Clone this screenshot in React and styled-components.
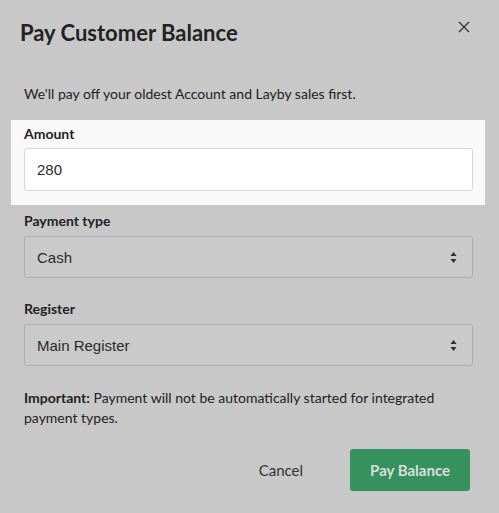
import styled, { createGlobalStyle } from "styled-components";

const GlobalStyle = createGlobalStyle`
  html, body {
    margin: 0;
    padding: 0;
    background: #c8c8c8;
  }
  body {
    font-family: Lato, "Liberation Sans", Arial, sans-serif;
    color: #222;
  }
`;

const Modal = styled.div`
  width: 499px;
  height: 513px;
  box-sizing: border-box;
  background: #c8c8c8;
  padding: 0 26px 0 24px;
`;

const Header = styled.div`
  display: flex;
  align-items: flex-start;
  justify-content: space-between;
  padding-top: 19px;
  margin-left: -4px;
  margin-right: 3px;
`;

const Title = styled.h2`
  margin: 0;
  font-size: 22px;
  line-height: 28px;
  font-weight: 700;
  color: #222;
`;

const CloseButton = styled.button`
  border: 0;
  background: transparent;
  padding: 0;
  margin-top: 2px;
  width: 12px;
  height: 12px;
  display: flex;
  cursor: pointer;
  svg {
    width: 12px;
    height: 12px;
  }
`;

const Intro = styled.p`
  margin: 37px 0 16px;
  font-size: 14px;
  line-height: 20px;
`;

const Field = styled.div`
  margin: ${(p) => (p.highlight ? "0 -12px 6px -13px" : "0 0 21px")};
  padding: ${(p) => (p.highlight ? "4px 12px 14px 13px" : "0")};
  background: ${(p) => (p.highlight ? "#f9f9f9" : "transparent")};
`;

const Label = styled.label`
  display: block;
  font-size: 14px;
  line-height: 20px;
  font-weight: 700;
  margin-bottom: ${(p) => (p.tight ? "4px" : "5px")};
`;

const Input = styled.div`
  height: 43px;
  box-sizing: border-box;
  border: 1px solid #d6d6d6;
  border-radius: 3px;
  background: #fff;
  padding: 0 12px;
  display: flex;
  align-items: center;
  font-family: "Liberation Sans", Arial, sans-serif;
  font-size: 15px;
  color: #2a2a2a;
`;

const Select = styled.div`
  height: 42px;
  box-sizing: border-box;
  border: 1px solid #adadad;
  border-radius: 3px;
  background: #cacaca;
  padding: 0 15px 0 12px;
  display: flex;
  align-items: center;
  justify-content: space-between;
  font-family: "Liberation Sans", Arial, sans-serif;
  font-size: 15px;
  color: #2a2a2a;
  svg {
    width: 7px;
    height: 13px;
  }
`;

const Note = styled.p`
  margin: 22px 0 0;
  font-size: 14px;
  line-height: 20px;
  strong {
    font-weight: 700;
  }
`;

const Footer = styled.div`
  display: flex;
  justify-content: flex-end;
  align-items: center;
  gap: 27px;
  margin-top: 21px;
  margin-right: 3px;
`;

const Button = styled.button`
  height: 42px;
  border: 0;
  border-radius: 3px;
  padding: 0 20px;
  font-family: Lato, "Liberation Sans", Arial, sans-serif;
  font-size: 15px;
  font-weight: ${(p) => (p.primary ? 700 : 400)};
  color: ${(p) => (p.primary ? "#dcdcdc" : "#333")};
  background: ${(p) => (p.primary ? "#35925c" : "transparent")};
  cursor: pointer;
`;

function Arrows() {
  return (
    <svg viewBox="0 0 7 13">
      <path d="M3.5 1 L6.5 5 H0.5 Z" fill="#2c2c2c" />
      <path d="M3.5 12 L6.5 8 H0.5 Z" fill="#2c2c2c" />
    </svg>
  );
}

export default function App() {
  return (
    <>
      <GlobalStyle />
      <Modal>
        <Header>
          <Title>Pay Customer Balance</Title>
          <CloseButton aria-label="Close">
            <svg viewBox="0 0 12 12">
              <path
                d="M1 1 L11 11 M11 1 L1 11"
                stroke="#333"
                strokeWidth="1.3"
                fill="none"
              />
            </svg>
          </CloseButton>
        </Header>
        <Intro>We'll pay off your oldest Account and Layby sales first.</Intro>
        <Field highlight>
          <Label tight>Amount</Label>
          <Input>280</Input>
        </Field>
        <Field>
          <Label>Payment type</Label>
          <Select>
            Cash
            <Arrows />
          </Select>
        </Field>
        <Field>
          <Label>Register</Label>
          <Select>
            Main Register
            <Arrows />
          </Select>
        </Field>
        <Note>
          <strong>Important:</strong> Payment will not be automatically started
          for integrated payment types.
        </Note>
        <Footer>
          <Button>Cancel</Button>
          <Button primary>Pay Balance</Button>
        </Footer>
      </Modal>
    </>
  );
}
